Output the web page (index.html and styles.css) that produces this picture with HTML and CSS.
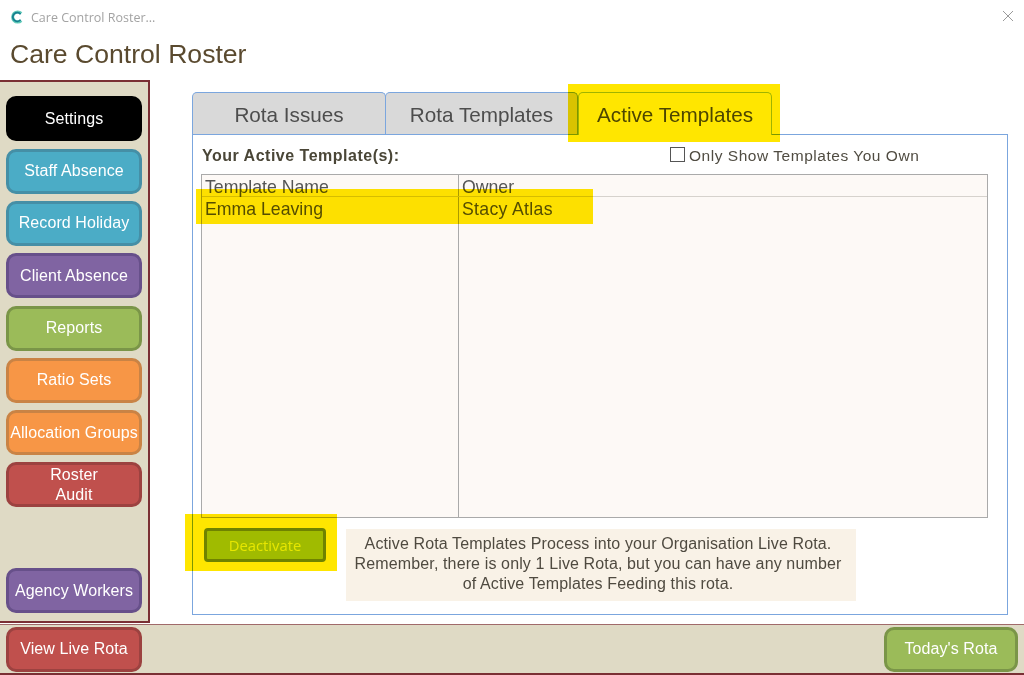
FILE: index.html
```html
<!DOCTYPE html>
<html lang="en">
<head>
<meta charset="utf-8">
<title>Care Control Roster</title>
<link rel="stylesheet" href="styles.css">
</head>
<body>
<div class="app">
  <header class="titlebar">
    <svg class="logo" width="14" height="14" viewBox="0 0 14 14"><path d="M11.2 3.4A5 5 0 1 0 11.2 10.6" fill="none" stroke="#5fc9b8" stroke-width="3.2"/><path d="M10.6 4.2A4.4 4.4 0 1 0 10.6 9.8" fill="none" stroke="#14808f" stroke-width="1.8"/></svg>
    <span class="wintitle">Care Control Roster...</span>
    <svg class="close" width="12" height="12" viewBox="0 0 12 12"><path d="M1 1L11 11M11 1L1 11" stroke="#9a9a9a" stroke-width="1"/></svg>
  </header>
  <h1 class="apptitle">Care Control Roster</h1>
  <div class="middle">
    <nav class="sidebar">
      <button class="btn black">Settings</button>
      <button class="btn blue">Staff Absence</button>
      <button class="btn blue">Record Holiday</button>
      <button class="btn purple">Client Absence</button>
      <button class="btn green">Reports</button>
      <button class="btn orange">Ratio Sets</button>
      <button class="btn orange alloc">Allocation Groups</button>
      <button class="btn red two">Roster<br>Audit</button>
      <button class="btn purple agency">Agency Workers</button>
    </nav>
    <main class="content">
      <div class="tabs">
        <div class="tab t1">Rota Issues</div>
        <div class="tab t2">Rota Templates</div>
        <div class="tab active">Active Templates</div>
      </div>
      <section class="panel">
        <div class="panelhead">
          <strong class="label">Your Active Template(s):</strong>
          <label class="own"><span class="check"></span>Only Show Templates You Own</label>
        </div>
        <div class="table">
          <div class="row head"><div class="c1">Template Name</div><div class="c2">Owner</div></div>
          <div class="row body"><div class="c1">Emma Leaving</div><div class="c2 owner">Stacy Atlas</div></div>
        </div>
        <div class="panelfoot">
          <button class="deactivate">Deactivate</button>
          <p class="note">Active Rota Templates Process into your Organisation Live Rota.<br>Remember, there is only 1 Live Rota, but you can have any number<br>of Active Templates Feeding this rota.</p>
        </div>
      </section>
    </main>
  </div>
  <footer class="bottombar">
    <button class="btn red">View Live Rota</button>
    <button class="btn green today">Today's Rota</button>
  </footer>
</div>
<div class="hl hl-tab"></div>
<div class="hl hl-row"></div>
<div class="hl hl-btn"></div>
</body>
</html>
```

FILE: styles.css
```css
* { box-sizing: border-box; }
html, body { margin: 0; height: 100%; }
body { background: #fff; font-family: "Liberation Sans", Arial, sans-serif; overflow: hidden; position: relative; color: #4d4d4d; }
.app { width: 1024px; height: 675px; display: flex; flex-direction: column; }
.titlebar { height: 34px; display: flex; align-items: center; padding: 0 10px 0 10px; flex: none; }
.logo { margin-right: 7px; }
.wintitle { font-family: "Open Sans", sans-serif; font-size: 12.5px; color: #a3a3a3; }
.close { margin-left: auto; margin-top: -3px; }
.apptitle { margin: 0; height: 46px; flex: none; padding: 4px 0 0 10px; font-size: 26.6px; line-height: 32px; font-weight: 400; color: #5a4a2f; }
.middle { height: 543px; flex: none; display: flex; }
.sidebar { width: 150px; flex: none; background: #dfdac5; border: 2px solid #7a2f34; border-left: 0; padding: 14.4px 6px 8px 6px; display: flex; flex-direction: column; gap: 7.3px; }
.btn { width: 136px; height: 45px; flex: none; padding: 0; border-radius: 10px; border: 3px solid; color: #fff; font-family: "Liberation Sans", Arial, sans-serif; font-size: 16px; line-height: 20px; text-align: center; letter-spacing: 0.08px; }
.black { background: #000; border-color: #000; }
.blue { background: #4bacc6; border-color: #458fa6; }
.purple { background: #8064a2; border-color: #67508a; }
.green { background: #9bbb59; border-color: #7a9548; }
.orange { background: #f79646; border-color: #c98345; }
.red { background: #c0504d; border-color: #9c4240; }
.alloc { white-space: nowrap; }
.two { padding-bottom: 6px; }
.agency { margin-top: 53.2px; padding-top: 2px; }
.today { width: 134px; }
.content { flex: 1; padding: 12px 16px 8px 42px; display: flex; flex-direction: column; }
.tabs { display: flex; height: 42px; flex: none; }
.tab { height: 42px; font-size: 20.7px; padding-top: 2px; display: flex; align-items: center; justify-content: center; background: #d9d9d9; border: 1px solid #7ba6de; border-bottom: 0; border-radius: 5px 5px 0 0; color: #4d4d4d; }
.t1 { width: 194px; }
.t2 { width: 193px; margin-left: -1px; }
.active { width: 194px; background: #fff; border-color: #a0c8e8; position: relative; z-index: 1; height: 43px; }
.panel { flex: 1; border: 1px solid #7ba6de; padding: 0 19px 0 8px; display: flex; flex-direction: column; background: #fff; }
.panelhead { height: 39px; flex: none; display: flex; align-items: center; font-size: 15.5px; padding-top: 2px; }
.label { color: #4a4637; font-size: 16px; margin-left: 1px; letter-spacing: 0.5px; width: 468px; white-space: nowrap; }
.own { display: flex; align-items: center; color: #504c42; letter-spacing: 0.53px; white-space: nowrap; }
.check { width: 15px; height: 15px; border: 1px solid #555; margin-right: 4px; background: #fff; margin-top: -2px; }
.table { height: 344px; flex: none; border: 1px solid #aaa; background: #fdf9f6; display: flex; flex-direction: column; }
.row { display: flex; font-size: 17.7px; color: #555; }
.head { height: 22px; border-bottom: 1px solid #d6d2cd; line-height: 24px; }
.body { flex: 1; line-height: 25px; }
.c1 { width: 257px; padding-left: 3px; border-right: 1px solid #aaa; }
.c2 { padding-left: 3px; }
.owner { letter-spacing: 0.3px; }
.panelfoot { display: flex; padding: 10px 0 0 3px; align-items: flex-start; }
.deactivate { width: 122px; height: 34px; background: #a0d000; border: 3px solid #6f9100; border-radius: 4px; color: #e6ff00; font-family: "Open Sans", sans-serif; font-size: 14.8px; padding: 0; }
.note { margin: 1px 0 0 20px; width: 510px; height: 72px; background: #f9f2e7; font-size: 16px; line-height: 20px; text-align: center; padding: 5px 6px 0 0; color: #4f4a40; letter-spacing: 0.13px; white-space: nowrap; }
.bottombar { height: 51px; flex: none; background: #dfdac5; border-top: 1px solid #a06a6a; border-bottom: 2px solid #7a2f34; display: flex; justify-content: space-between; align-items: center; padding: 0 6px; margin-top: 1px; }
.hl { position: absolute; z-index: 2; background: #ffe600; mix-blend-mode: multiply; }
.hl-tab { left: 568px; top: 84px; width: 212px; height: 58px; }
.hl-row { left: 196px; top: 189px; width: 397px; height: 35px; }
.hl-btn { left: 185px; top: 514px; width: 152px; height: 57px; }
```
